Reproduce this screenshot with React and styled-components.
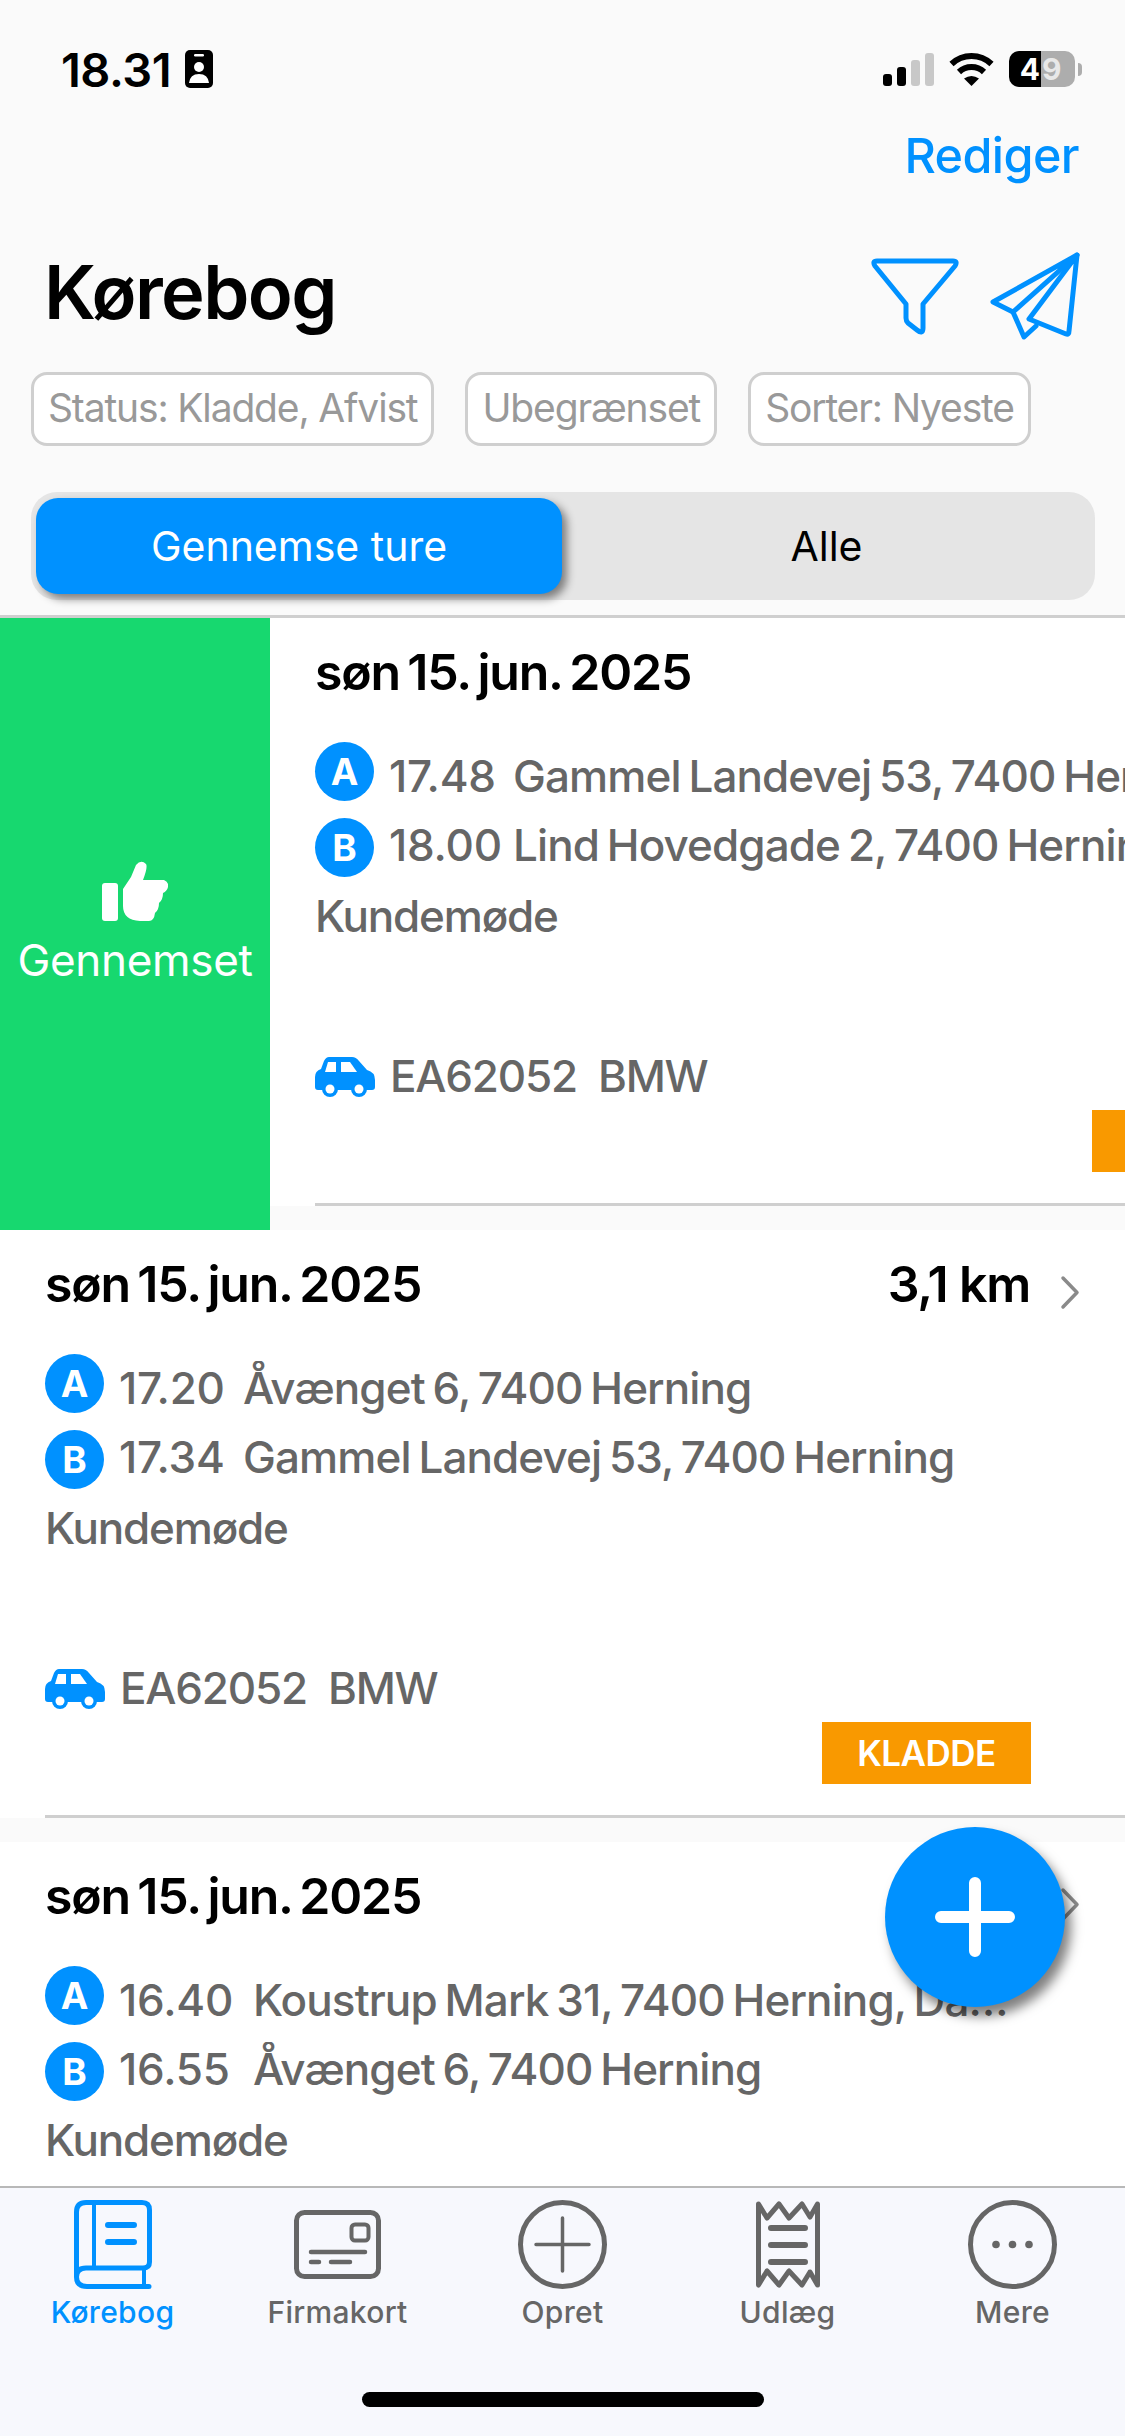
import styled, { createGlobalStyle } from "styled-components";

const BLUE = "#0091ff";
const GREY_TEXT = "#666666";

const GlobalStyle = createGlobalStyle`
  html, body {
    margin: 0;
    padding: 0;
    background: #fafafa;
  }
  * {
    box-sizing: border-box;
  }
`;

const trips = [
  {
    id: 1,
    km: "",
    timeWidth: 124,
    from: "17.48",
    fromAddress: "Gammel Landevej 53, 7400 Herning",
    to: "18.00",
    toAddress: "Lind Hovedgade 2, 7400 Herning",
    swiped: true,
  },
  {
    id: 2,
    km: "3,1 km",
    timeWidth: 124,
    from: "17.20",
    fromAddress: "Åvænget 6, 7400 Herning",
    to: "17.34",
    toAddress: "Gammel Landevej 53, 7400 Herning",
  },
  {
    id: 3,
    km: "7,1 km",
    timeWidth: 134,
    from: "16.40",
    fromAddress: "Koustrup Mark 31, 7400 Herning, Danmark",
    to: "16.55",
    toAddress: "Åvænget 6, 7400 Herning",
  },
];

const tabs = [
  { label: "Kørebog", Icon: BookIcon, active: true },
  { label: "Firmakort", Icon: CardIcon },
  { label: "Opret", Icon: PlusCircleIcon },
  { label: "Udlæg", Icon: ReceiptIcon },
  { label: "Mere", Icon: MoreIcon },
];

function BadgeIcon() {
  return (
    <svg width="28" height="38" viewBox="0 0 28 38">
      <rect width="28" height="38" rx="5" fill="#000" />
      <rect x="9" y="4" width="10" height="2.5" rx="1.2" fill="#fff" />
      <circle cx="14" cy="17" r="5" fill="#fff" />
      <path d="M4 33 Q5 24 14 24 Q23 24 24 33 Z" fill="#fff" />
    </svg>
  );
}

function SignalIcon() {
  return (
    <svg width="51" height="33" viewBox="0 0 51 33">
      <rect x="0" y="21" width="9" height="12" rx="3" fill="#000" />
      <rect x="14" y="14" width="9" height="19" rx="3" fill="#000" />
      <rect x="28" y="7" width="9" height="26" rx="3" fill="#c8c8c8" />
      <rect x="42" y="0" width="9" height="33" rx="3" fill="#c8c8c8" />
    </svg>
  );
}

function WifiIcon() {
  return (
    <svg width="45" height="33" viewBox="0 0 45 33">
      <path d="M2.5 11 A29 29 0 0 1 42.5 11" fill="none" stroke="#000" strokeWidth="6" />
      <path d="M10 19 A18 18 0 0 1 35 19" fill="none" stroke="#000" strokeWidth="6" />
      <path d="M15 25.5 Q22.5 20.5 30 25.5 L22.5 33 Z" fill="#000" />
    </svg>
  );
}

function FilterIcon() {
  return (
    <svg width="88" height="78" viewBox="0 0 88 78">
      <path
        d="M6 3 H82 Q87 3 84 8 L52 46 V70 Q52 77 46 72 L37 65 Q35 63 35 60 V46 L4 8 Q1 3 6 3 Z"
        fill="none"
        stroke={BLUE}
        strokeWidth="5"
        strokeLinejoin="round"
      />
    </svg>
  );
}

function PlaneIcon() {
  return (
    <svg width="90" height="90" viewBox="0 0 90 90">
      <g fill="none" stroke={BLUE} strokeWidth="5" strokeLinejoin="round" strokeLinecap="round">
        <path d="M87 3 L3 50 L23 60 Z" />
        <path d="M23 60 L34 85 L46 74" />
        <path d="M87 3 L39 67 L76 82 Q79 83 79 79 Z" />
      </g>
    </svg>
  );
}

function ThumbIcon() {
  return (
    <svg width="66" height="60" viewBox="0 0 66 60">
      <rect x="0" y="22" width="16" height="38" rx="3" fill="#fff" />
      <path
        d="M21 28 L29 16 L34 4 Q39 -2 44 3 Q46 6 41 19 H62 Q67 21 66 26 Q65 30 61 32 Q61 39 57 42 Q57 49 53 52 Q52 60 47 60 H38 Q21 59 21 45 Z"
        fill="#fff"
      />
    </svg>
  );
}

function CarIcon() {
  return (
    <svg width="60" height="41" viewBox="0 0 60 41">
      <path
        d="M14 1 H37 Q41 1 44 5 L52 14 Q60 16 60 24 V31 Q60 34 57 34 H3 Q0 34 0 31 V21 Q0 15 6 13 L9 5 Q11 1 14 1 Z"
        fill={BLUE}
      />
      <path d="M13 6 H21 V16 H10 Z" fill="#fff" />
      <path d="M26 6 H35 L42 16 H26 Z" fill="#fff" />
      <circle cx="15" cy="33" r="8" fill={BLUE} />
      <circle cx="44" cy="33" r="8" fill={BLUE} />
      <circle cx="15" cy="33" r="4.5" fill="#fff" />
      <circle cx="44" cy="33" r="4.5" fill="#fff" />
    </svg>
  );
}

function BookIcon({ color }) {
  return (
    <svg width="78" height="89" viewBox="0 0 78 89">
      <g fill="none" stroke={color} strokeLinecap="round">
        <path
          d="M75 86.5 H13 Q2.5 86.5 2.5 77 V12 Q2.5 2.5 12 2.5 H68 Q75.5 2.5 75.5 10 V62 Q75.5 68 69 68 H12 Q2.5 68 2.5 77"
          strokeWidth="5"
        />
        <path d="M20 3 V67" strokeWidth="4" />
        <path d="M70 68 V86" strokeWidth="4" />
        <path d="M34 25 H60 M34 42 H60" strokeWidth="6" />
      </g>
    </svg>
  );
}

function CardIcon({ color }) {
  return (
    <svg width="87" height="69" viewBox="0 0 87 69">
      <g fill="none" stroke={color} strokeLinecap="round">
        <rect x="2.5" y="2.5" width="82" height="64" rx="8" strokeWidth="5" />
        <rect x="57.5" y="14.5" width="17" height="16" rx="3.5" strokeWidth="4" />
        <path d="M17 42 H71" strokeWidth="4.5" />
        <path d="M17 52 H25 M37 52 H56" strokeWidth="4.5" />
      </g>
    </svg>
  );
}

function PlusCircleIcon({ color }) {
  return (
    <svg width="89" height="89" viewBox="0 0 89 89">
      <g fill="none" stroke={color}>
        <circle cx="44.5" cy="44.5" r="42" strokeWidth="5" />
        <path d="M18 44.5 H71 M44.5 18 V71" strokeWidth="3.5" strokeLinecap="round" />
      </g>
    </svg>
  );
}

function ReceiptIcon({ color }) {
  return (
    <svg width="64" height="87" viewBox="0 0 64 87">
      <g fill="none" stroke={color} strokeLinejoin="round" strokeLinecap="round">
        <path
          d="M2.5 3 L11 17 L23 3 L33 17 L46 3 L54 16 L61.5 3 V84 L54 71 L46 84 L33 70 L23 84 L11 70 L2.5 84 Z"
          strokeWidth="5"
        />
        <path d="M15 27 H49 M15 44 H49 M15 61 H49" strokeWidth="6" />
      </g>
    </svg>
  );
}

function MoreIcon({ color }) {
  return (
    <svg width="89" height="89" viewBox="0 0 89 89">
      <circle cx="44.5" cy="44.5" r="42" fill="none" stroke={color} strokeWidth="5" />
      <circle cx="28" cy="44.5" r="3.8" fill={color} />
      <circle cx="44.5" cy="44.5" r="3.8" fill={color} />
      <circle cx="61" cy="44.5" r="3.8" fill={color} />
    </svg>
  );
}

const Trip = ({ trip }) => (
  <TripRow>
    {trip.swiped && (
      <SwipeAction>
        <ThumbIcon />
        <SwipeLabel>Gennemset</SwipeLabel>
      </SwipeAction>
    )}
    <TripCard>
      <DateRow>
        <DateText>søn 15. jun. 2025</DateText>
        {trip.km && (
          <DistanceBox>
            <Distance>{trip.km}</Distance>
            <Chevron viewBox="0 0 20 35" width="20" height="35">
              <path d="M3 3 L17 17.5 L3 32" fill="none" stroke="#8a8a8a" strokeWidth="3.5" strokeLinecap="round" strokeLinejoin="round" />
            </Chevron>
          </DistanceBox>
        )}
      </DateRow>
      <StopRow $first>
        <StopBadge>A</StopBadge>
        <StopText $first>
          <StopTime style={{ width: trip.timeWidth }}>{trip.from}</StopTime>
          <StopAddress $swiped={trip.swiped}>{trip.fromAddress}</StopAddress>
        </StopText>
      </StopRow>
      <StopRow>
        <StopBadge>B</StopBadge>
        <StopText>
          <StopTime style={{ width: trip.timeWidth }}>{trip.to}</StopTime>
          <StopAddress $swiped={trip.swiped}>{trip.toAddress}</StopAddress>
        </StopText>
      </StopRow>
      <Purpose>Kundemøde</Purpose>
      <CarRow>
        <CarIcon />
        <CarText>EA62052&nbsp; BMW</CarText>
      </CarRow>
      <StatusRow>
        <StatusTag>KLADDE</StatusTag>
      </StatusRow>
      <Separator />
    </TripCard>
  </TripRow>
);

export default function App() {
  return (
    <Page>
      <GlobalStyle />
      <StatusBar>
        <TimeBox>
          <Time>18.31</Time>
          <BadgeIcon />
        </TimeBox>
        <StatusIcons>
          <SignalIcon />
          <WifiIcon />
          <BatteryBox>
            <Battery>
              <BatteryFull>4</BatteryFull>
              <BatteryEmpty>9</BatteryEmpty>
            </Battery>
            <BatteryNub />
          </BatteryBox>
        </StatusIcons>
      </StatusBar>

      <NavRow>
        <EditLink>Rediger</EditLink>
      </NavRow>

      <TitleRow>
        <Title>Kørebog</Title>
        <TitleActions>
          <FilterIcon />
          <PlaneIcon />
        </TitleActions>
      </TitleRow>

      <Chips>
        <Chip>Status: Kladde, Afvist</Chip>
        <Chip>Ubegrænset</Chip>
        <Chip>Sorter: Nyeste</Chip>
      </Chips>

      <Segments>
        <Segment $active>Gennemse ture</Segment>
        <Segment>Alle</Segment>
      </Segments>

      <List>
        {trips.map((trip) => (
          <Trip key={trip.id} trip={trip} />
        ))}
      </List>

      <TabBar>
        <TabItems>
          {tabs.map(({ label, Icon, active }) => (
            <TabItem key={label}>
              <TabIconBox>
                <Icon color={active ? BLUE : GREY_TEXT} />
              </TabIconBox>
              <TabLabel $active={active}>{label}</TabLabel>
            </TabItem>
          ))}
        </TabItems>
        <HomeIndicator />
      </TabBar>

      <Fab>
        <svg width="80" height="80" viewBox="0 0 80 80">
          <path d="M40 6 V74 M6 40 H74" stroke="#fff" strokeWidth="12" strokeLinecap="round" />
        </svg>
      </Fab>
    </Page>
  );
}

const Page = styled.div`
  position: relative;
  display: flex;
  flex-direction: column;
  width: 1125px;
  height: 2436px;
  overflow: hidden;
  background: #fafafa;
  font-family: Inter, "Liberation Sans", sans-serif;
`;

const StatusBar = styled.div`
  display: flex;
  justify-content: space-between;
  align-items: center;
  height: 124px;
  padding: 14px 43px 0 61px;
`;

const TimeBox = styled.div`
  display: flex;
  align-items: center;
  gap: 14px;
`;

const Time = styled.span`
  font-size: 47px;
  font-weight: 600;
  color: #000;
  letter-spacing: -0.5px;
`;

const StatusIcons = styled.div`
  display: flex;
  align-items: center;
  gap: 15px;
`;

const BatteryBox = styled.div`
  display: flex;
  align-items: center;
  gap: 3px;
`;

const Battery = styled.div`
  display: flex;
  width: 66px;
  height: 36px;
  border-radius: 10px;
  overflow: hidden;
  font-size: 30px;
  font-weight: 700;
  line-height: 36px;
`;

const BatteryFull = styled.span`
  width: 32px;
  background: #000;
  color: #fff;
  text-align: right;
  padding-right: 1px;
`;

const BatteryEmpty = styled.span`
  width: 34px;
  background: #adadad;
  color: #e8e8e8;
  text-align: left;
  padding-left: 1px;
`;

const BatteryNub = styled.div`
  width: 4px;
  height: 13px;
  border-radius: 0 4px 4px 0;
  background: #adadad;
`;

const NavRow = styled.div`
  display: flex;
  justify-content: flex-end;
  align-items: center;
  height: 62px;
  padding-right: 46px;
`;

const EditLink = styled.span`
  font-size: 48.5px;
  font-weight: 500;
  color: ${BLUE};
  letter-spacing: -0.6px;
`;

const TitleRow = styled.div`
  display: flex;
  justify-content: space-between;
  align-items: center;
  height: 120px;
  margin: 46px 0 20px;
  padding: 0 45px 0 44px;
`;

const Title = styled.h1`
  margin: 0;
  font-size: 74px;
  font-weight: 600;
  color: #000;
  letter-spacing: -1.6px;
`;

const TitleActions = styled.div`
  display: flex;
  align-items: center;
  gap: 31px;
  margin-top: 10px;
`;

const Chips = styled.div`
  display: flex;
  gap: 31px;
  padding-left: 31px;
`;

const Chip = styled.div`
  height: 74px;
  padding: 0 14px;
  border: 3px solid #cfcfcf;
  border-radius: 16px;
  background: #fff;
  color: #999;
  font-size: 39px;
  letter-spacing: -1.15px;
  line-height: 66px;
  white-space: nowrap;
`;

const Segments = styled.div`
  display: flex;
  width: 1064px;
  height: 108px;
  margin: 46px 0 15px 31px;
  padding: 6px 4px 6px 5px;
  border-radius: 26px;
  background: #e5e5e5;
`;

const Segment = styled.div`
  flex: ${(p) => (p.$active ? "0 0 526px" : "1")};
  border-radius: 22px;
  background: ${(p) => (p.$active ? BLUE : "transparent")};
  box-shadow: ${(p) => (p.$active ? "5px 5px 9px rgba(0, 0, 0, 0.45)" : "none")};
  color: ${(p) => (p.$active ? "#fff" : "#000")};
  font-size: 41px;
  line-height: 96px;
  text-align: center;
`;

const List = styled.div`
  flex: 1;
  min-height: 0;
  overflow: hidden;
  border-top: 3px solid #cfcfcf;
`;

const TripRow = styled.div`
  display: flex;
  height: 612px;
`;

const SwipeAction = styled.div`
  flex: 0 0 270px;
  display: flex;
  flex-direction: column;
  align-items: center;
  justify-content: center;
  gap: 12px;
  background: #17d86f;
`;

const SwipeLabel = styled.span`
  color: #fff;
  font-size: 44px;
  letter-spacing: -0.3px;
`;

const TripCard = styled.div`
  flex: 0 0 1125px;
  display: flex;
  flex-direction: column;
  height: 588px;
  padding: 0 0 0 45px;
  background: #fff;
`;

const DateRow = styled.div`
  display: flex;
  justify-content: space-between;
  align-items: center;
  height: 108px;
  padding-right: 45px;
`;

const DateText = styled.span`
  font-size: 50px;
  font-weight: 600;
  color: #000;
  letter-spacing: -1.2px;
  word-spacing: -4px;
`;

const DistanceBox = styled.div`
  display: flex;
  align-items: center;
  gap: 30px;
`;

const Distance = styled.span`
  font-size: 50px;
  font-weight: 600;
  color: #000;
  letter-spacing: -1.2px;
`;

const Chevron = styled.svg`
  margin-top: 16px;
`;

const StopRow = styled.div`
  display: flex;
  align-items: center;
  height: 76px;
  gap: 15px;
  margin-top: ${(p) => (p.$first ? "7px" : "0")};
`;

const StopBadge = styled.div`
  flex: 0 0 59px;
  height: 59px;
  border-radius: 50%;
  background: ${BLUE};
  color: #fff;
  font-size: 37px;
  font-weight: 700;
  line-height: 59px;
  text-align: center;
`;

const StopText = styled.div`
  display: flex;
  margin-top: ${(p) => (p.$first ? "10px" : "-4px")};
  color: ${GREY_TEXT};
  font-size: 44px;
  font-weight: 500;
  letter-spacing: -0.9px;
  white-space: nowrap;
`;

const StopTime = styled.span`
  flex: none;
  letter-spacing: -0.2px;
`;

const StopAddress = styled.span`
  max-width: ${(p) => (p.$swiped ? "none" : "768px")};
  overflow: hidden;
  text-overflow: ellipsis;
  word-spacing: -3px;
`;

const Purpose = styled.div`
  height: 60px;
  line-height: 60px;
  margin-top: 1px;
  color: ${GREY_TEXT};
  font-size: 44px;
  font-weight: 500;
  letter-spacing: -1.2px;
`;

const CarRow = styled.div`
  display: flex;
  align-items: center;
  gap: 15px;
  height: 60px;
  margin-top: 100px;
`;

const CarText = styled.span`
  color: ${GREY_TEXT};
  font-size: 44px;
  font-weight: 500;
  letter-spacing: -1.2px;
`;

const StatusRow = styled.div`
  display: flex;
  justify-content: flex-end;
  margin-top: 4px;
  padding-right: 94px;
`;

const StatusTag = styled.div`
  width: 209px;
  height: 62px;
  background: #f99900;
  color: #fff;
  font-size: 35px;
  font-weight: 600;
  line-height: 62px;
  text-align: center;
  letter-spacing: -0.5px;
`;

const Separator = styled.div`
  height: 3px;
  margin-top: 31px;
  background: #cfcfcf;
`;

const TabBar = styled.div`
  display: flex;
  flex-direction: column;
  height: 250px;
  border-top: 2px solid #b8b8b8;
  background: #f7f8fd;
`;

const TabItems = styled.div`
  display: grid;
  grid-template-columns: repeat(5, 225px);
  padding-top: 11px;
`;

const TabItem = styled.div`
  display: flex;
  flex-direction: column;
  align-items: center;
`;

const TabIconBox = styled.div`
  display: flex;
  align-items: center;
  justify-content: center;
  height: 91px;
`;

const TabLabel = styled.span`
  margin-top: 4px;
  color: ${(p) => (p.$active ? BLUE : GREY_TEXT)};
  font-size: 30px;
  font-weight: 500;
  letter-spacing: 0.3px;
`;

const HomeIndicator = styled.div`
  align-self: center;
  width: 402px;
  height: 15px;
  margin-top: 62px;
  border-radius: 8px;
  background: #000;
`;

const Fab = styled.div`
  position: absolute;
  left: 885px;
  top: 1827px;
  display: flex;
  align-items: center;
  justify-content: center;
  width: 180px;
  height: 180px;
  border-radius: 50%;
  background: ${BLUE};
  box-shadow: 6px 9px 12px rgba(0, 0, 0, 0.5);
`;
